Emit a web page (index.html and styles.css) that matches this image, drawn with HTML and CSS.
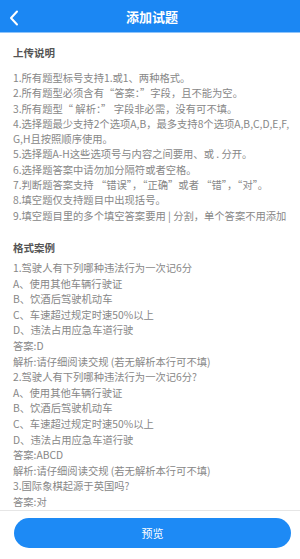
FILE: index.html
```html
<!DOCTYPE html>
<html lang="zh">
<head>
    <meta charset="UTF-8">
    <meta name="viewport" content="width=device-width, initial-scale=1.0">
    <title>添加试题</title>
    <link rel="stylesheet" href="styles.css">
</head>
<body>
    <div class="page">
        <div class="topbar">
            <span class="back">
                <svg width="10" height="16" viewBox="0 0 10 16"><polyline points="8,1.5 2,8 8,14.5" fill="none" stroke="#fff" stroke-width="2" stroke-linecap="round" stroke-linejoin="round"/></svg>
            </span>
            <h1>添加试题</h1>
        </div>

        <div class="content">
            <h2>上传说明</h2>
            <div class="rules">
                <p>1.所有题型标号支持1.或1、两种格式。</p>
                <p>2.所有题型必须含有“答案：”字段，且不能为空。</p>
                <p>3.所有题型“ 解析：” 字段非必需，没有可不填。</p>
                <p>4.选择题最少支持2个选项A,B，最多支持8个选项A,B,C,D,E,F,<wbr>G,H且按照顺序使用。</p>
                <p>5.选择题A-H这些选项号与内容之间要用、或 . 分开。</p>
                <p>6.选择题答案中请勿加分隔符或者空格。</p>
                <p>7.判断题答案支持 “错误”，“正确”或者 “错”，“对”。</p>
                <p>8.填空题仅支持题目中出现括号。</p>
                <p class="nowrap">9.填空题目里的多个填空答案要用 | 分割，单个答案不用添加</p>
            </div>

            <h2 class="second">格式案例</h2>
            <div class="sample">
                <p>1.驾驶人有下列哪种违法行为一次记6分</p>
                <p>A、使用其他车辆行驶证</p>
                <p>B、饮酒后驾驶机动车</p>
                <p>C、车速超过规定时速50%以上</p>
                <p>D、违法占用应急车道行驶</p>
                <p>答案:D</p>
                <p>解析:请仔细阅读交规 (若无解析本行可不填)</p>
                <p>2.驾驶人有下列哪种违法行为一次记6分?</p>
                <p>A、使用其他车辆行驶证</p>
                <p>B、饮酒后驾驶机动车</p>
                <p>C、车速超过规定时速50%以上</p>
                <p>D、违法占用应急车道行驶</p>
                <p>答案:ABCD</p>
                <p>解析:请仔细阅读交规 (若无解析本行可不填)</p>
                <p>3.国际象棋起源于英国吗?</p>
                <p>答案:对</p>
            </div>
        </div>

        <div class="footer">
            <button class="btn">预览</button>
        </div>
    </div>
</body>
</html>
```

FILE: styles.css
```css
body {
    margin: 0;
    font-family: "Noto Sans CJK SC", "Noto Sans", sans-serif;
    background: #fff;
}

.page {
    height: 559px;
    display: flex;
    flex-direction: column;
    overflow: hidden;
}

.topbar {
    height: 32px;
    background: #1b87f3;
    border-bottom: 1px solid #8fc4fa;
    display: flex;
    align-items: center;
    justify-content: center;
    position: relative;
    flex-shrink: 0;
}

.topbar h1 {
    margin: 0 0 0 4px;
    font-size: 13px;
    font-weight: bold;
    color: #fff;
}

.back {
    position: absolute;
    left: 9px;
    top: 10px;
    line-height: 0;
}

.content {
    flex: 1;
    overflow: hidden;
    padding: 12px 2px 0 13px;
}

h2 {
    margin: 0 0 10px;
    font-size: 10.5px;
    line-height: 15px;
    font-weight: bold;
    color: #555;
}

h2.second {
    margin: 17px 0 5px;
}

p {
    margin: 0;
    font-size: 10.3px;
    color: #878787;
}

.rules p {
    line-height: 15.3px;
}

.rules p.nowrap {
    white-space: nowrap;
}

.sample p {
    line-height: 15.6px;
}

.footer {
    flex-shrink: 0;
    border-top: 1px solid #e6e6e6;
    padding: 7px 9px 11px 14px;
}

.btn {
    display: block;
    width: 100%;
    height: 30px;
    border: none;
    border-radius: 15px;
    background: #1d8af5;
    color: #fff;
    font-family: inherit;
    font-size: 11px;
}
```
